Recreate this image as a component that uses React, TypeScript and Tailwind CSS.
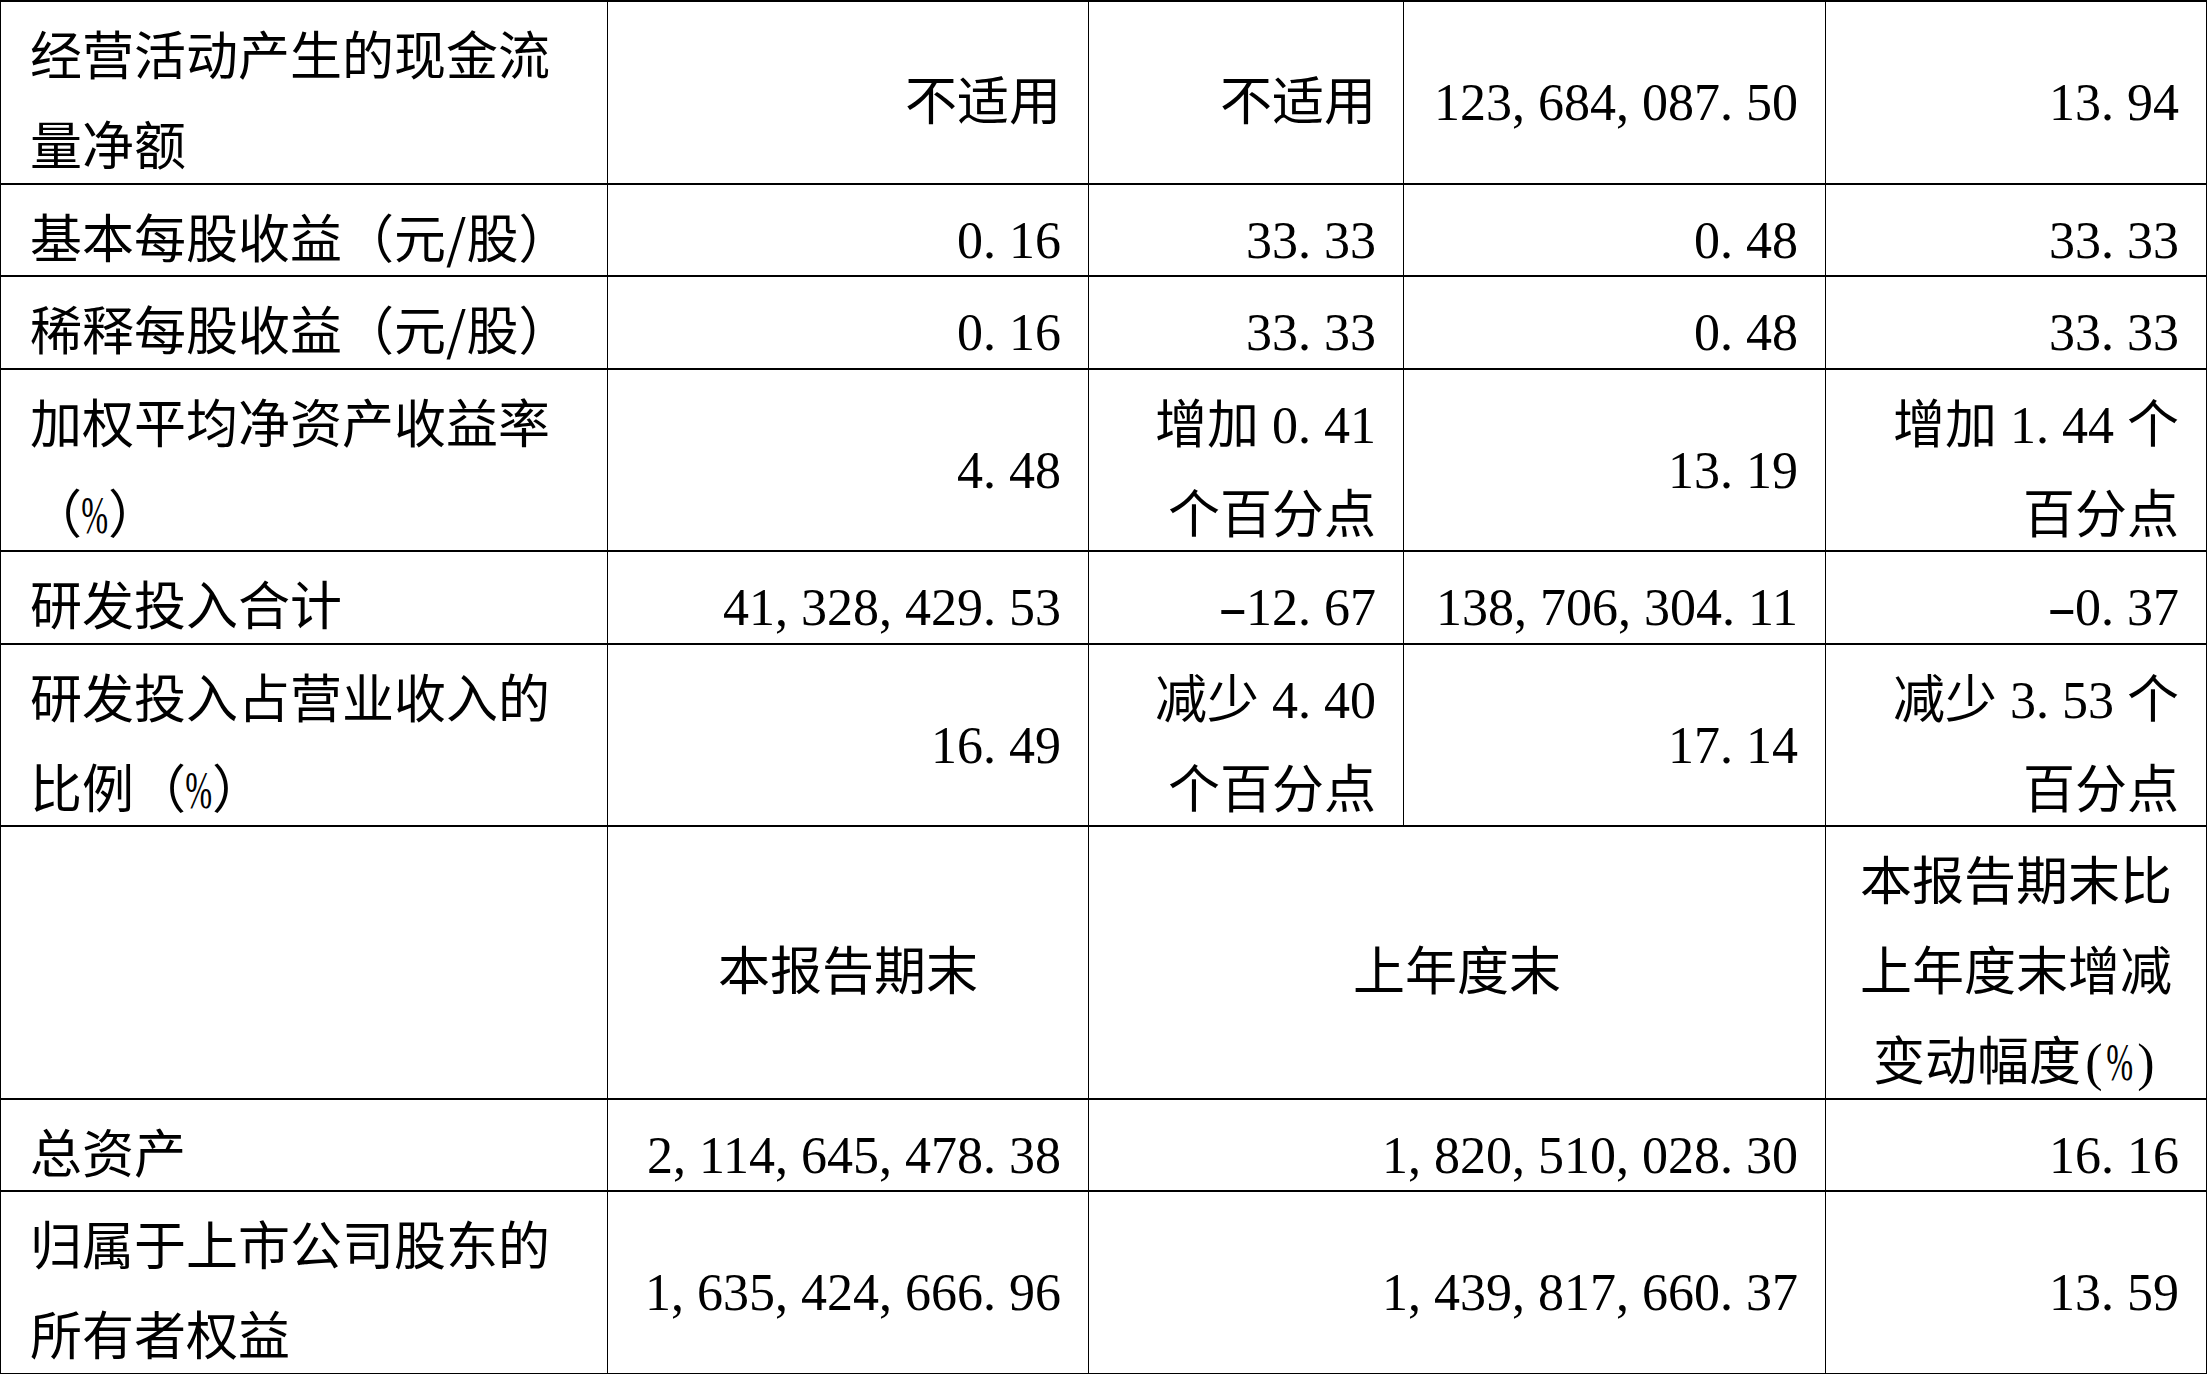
import React from "react";

const LS = "font-['Liberation_Serif',serif] leading-none";

function Run({ s }: { s: string }) {
  const lines = s.split("\n");
  let key = 0;
  const out: React.ReactNode[] = [];
  lines.forEach((line, li) => {
    if (li > 0) out.push(<br key={key++} />);
    let buf = "";
    let cjk = "";
    const flush = () => {
      if (buf) {
        out.push(
          <span key={key++} className={LS}>
            {buf}
          </span>
        );
        buf = "";
      }
    };
    const flushC = () => {
      if (cjk) {
        out.push(<span key={key++}>{cjk}</span>);
        cjk = "";
      }
    };
    for (const c of line) {
      if (/[0-9 ]/.test(c)) {
        flushC();
        buf += c;
        continue;
      }
      flush();
      if (c === "," || c === ".") {
        flushC();
        out.push(
          <span key={key++} className={`${LS} inline-block w-[26px] text-left`}>
            {c}
          </span>
        );
      } else if (c === "-") {
        flushC();
        out.push(
          <span key={key++} className={`${LS} inline-flex w-[26px] justify-center`}>
            <span className="inline-block scale-x-[1.7]">-</span>
          </span>
        );
      } else if (c === "%") {
        flushC();
        out.push(
          <span key={key++} className={`${LS} inline-flex w-[26px] justify-center`}>
            <span className="inline-block scale-x-[0.62]">%</span>
          </span>
        );
      } else if (c === "(" || c === ")") {
        flushC();
        out.push(
          <span key={key++} className={`${LS} inline-flex w-[26px] justify-center`}>
            {c}
          </span>
        );
      } else {
        cjk += c;
      }
    }
    flush();
    flushC();
  });
  return <>{out}</>;
}

type CellProps = {
  s: string;
  kind: "label" | "num" | "center";
  colSpan?: number;
};

function Cell({ s, kind, colSpan }: CellProps) {
  const pad =
    kind === "label"
      ? "pl-[29px] pr-[28px] text-left"
      : kind === "num"
      ? "pl-[28px] pr-[27px] text-right"
      : "px-[28px] text-center";
  return (
    <td
      colSpan={colSpan}
      className={`border-y-2 border-x-[1.5px] border-black align-middle py-0 ${pad}`}
    >
      <div className="pt-[6px] -mb-[5.5px]">
        <Run s={s} />
      </div>
    </td>
  );
}

export default function App() {
  return (
    <div className="w-[2207px] h-[1374px] bg-white overflow-hidden">
      <table className="table-fixed border-collapse w-[2206px] text-[52px] leading-[90px] text-black font-['Noto_Sans_CJK_SC',sans-serif]">
        <colgroup>
          <col className="w-[607px]" />
          <col className="w-[481px]" />
          <col className="w-[315px]" />
          <col className="w-[422px]" />
          <col className="w-[381px]" />
        </colgroup>
        <tbody>
          <tr>
            <Cell kind="label" s={"经营活动产生的现金流\n量净额"} />
            <Cell kind="num" s="不适用" />
            <Cell kind="num" s="不适用" />
            <Cell kind="num" s="123,684,087.50" />
            <Cell kind="num" s="13.94" />
          </tr>
          <tr>
            <Cell kind="label" s="基本每股收益（元/股）" />
            <Cell kind="num" s="0.16" />
            <Cell kind="num" s="33.33" />
            <Cell kind="num" s="0.48" />
            <Cell kind="num" s="33.33" />
          </tr>
          <tr>
            <Cell kind="label" s="稀释每股收益（元/股）" />
            <Cell kind="num" s="0.16" />
            <Cell kind="num" s="33.33" />
            <Cell kind="num" s="0.48" />
            <Cell kind="num" s="33.33" />
          </tr>
          <tr>
            <Cell kind="label" s={"加权平均净资产收益率\n（%）"} />
            <Cell kind="num" s="4.48" />
            <Cell kind="num" s={"增加 0.41\n个百分点"} />
            <Cell kind="num" s="13.19" />
            <Cell kind="num" s={"增加 1.44 个\n百分点"} />
          </tr>
          <tr>
            <Cell kind="label" s="研发投入合计" />
            <Cell kind="num" s="41,328,429.53" />
            <Cell kind="num" s="-12.67" />
            <Cell kind="num" s="138,706,304.11" />
            <Cell kind="num" s="-0.37" />
          </tr>
          <tr>
            <Cell kind="label" s={"研发投入占营业收入的\n比例（%）"} />
            <Cell kind="num" s="16.49" />
            <Cell kind="num" s={"减少 4.40\n个百分点"} />
            <Cell kind="num" s="17.14" />
            <Cell kind="num" s={"减少 3.53 个\n百分点"} />
          </tr>
          <tr>
            <Cell kind="label" s="" />
            <Cell kind="center" s="本报告期末" />
            <Cell kind="center" s="上年度末" colSpan={2} />
            <Cell kind="center" s={"本报告期末比\n上年度末增减\n变动幅度(%)"} />
          </tr>
          <tr>
            <Cell kind="label" s="总资产" />
            <Cell kind="num" s="2,114,645,478.38" />
            <Cell kind="num" s="1,820,510,028.30" colSpan={2} />
            <Cell kind="num" s="16.16" />
          </tr>
          <tr>
            <Cell kind="label" s={"归属于上市公司股东的\n所有者权益"} />
            <Cell kind="num" s="1,635,424,666.96" />
            <Cell kind="num" s="1,439,817,660.37" colSpan={2} />
            <Cell kind="num" s="13.59" />
          </tr>
        </tbody>
      </table>
    </div>
  );
}
